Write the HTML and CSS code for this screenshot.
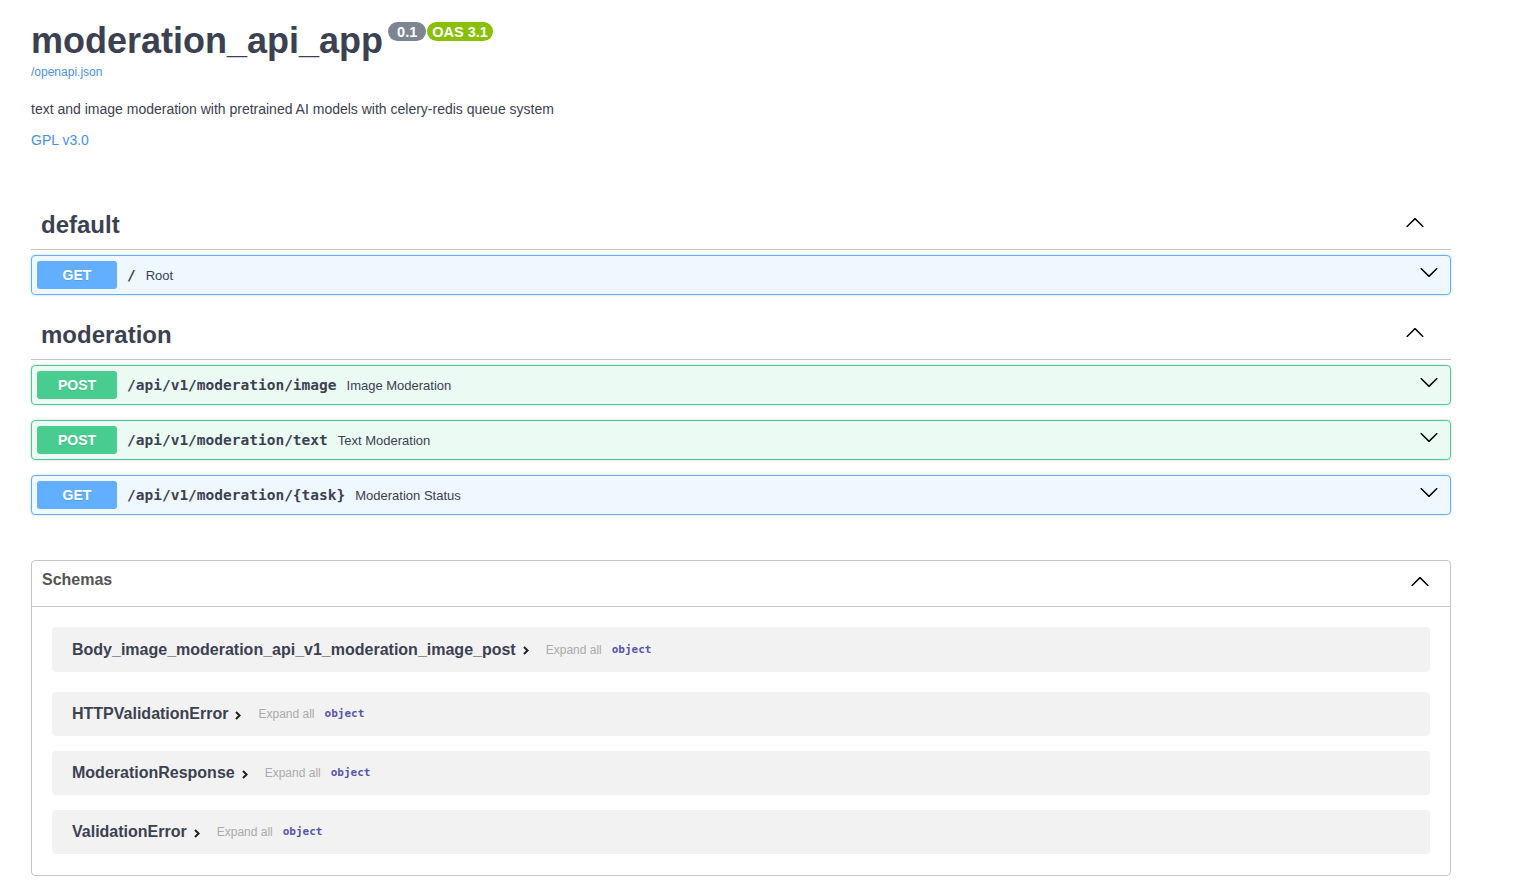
FILE: index.html
```html
<!DOCTYPE html>
<html lang="en">
<head>
<meta charset="utf-8">
<title>moderation_api_app - Swagger UI</title>
<link rel="stylesheet" href="styles.css">
</head>
<body>
<div class="wrapper">
  <section class="info">
    <div class="title-row">
      <h2 class="title">moderation_api_app</h2>
      <span class="badge badge-version"><span class="badge-text"> 0.1 </span></span>
      <span class="badge badge-oas"><span class="badge-text">OAS 3.1</span></span>
    </div>
    <a class="url" href="#">/openapi.json</a>
    <p class="description">text and image moderation with pretrained AI models with celery-redis queue system</p>
    <a class="license" href="#">GPL v3.0</a>
  </section>

  <section class="tag-section tag-first">
    <h3 class="tag">
      <span class="tag-name">default</span>
      <svg class="tag-arrow" width="20" height="20" viewBox="0 0 20 20"><path d="M17.418 14.908c.272.268.709.268.979 0s.271-.701 0-.969l-7.908-7.83c-.27-.268-.707-.268-.979 0l-7.908 7.83c-.27.268-.27.701 0 .969.271.268.709.268.979 0L10 7.767l7.418 7.141z"/></svg>
    </h3>
    <div class="opblock opblock-get">
      <span class="method">GET</span>
      <span class="path">/</span>
      <span class="summary">Root</span>
      <svg class="op-arrow" width="20" height="20" viewBox="0 0 20 20"><path d="M17.418 6.109c.272-.268.709-.268.979 0s.271.701 0 .969l-7.908 7.83c-.27.268-.707.268-.979 0l-7.908-7.83c-.27-.268-.27-.701 0-.969.271-.268.709-.268.979 0L10 13.25l7.418-7.141z"/></svg>
    </div>
  </section>

  <section class="tag-section">
    <h3 class="tag">
      <span class="tag-name">moderation</span>
      <svg class="tag-arrow" width="20" height="20" viewBox="0 0 20 20"><path d="M17.418 14.908c.272.268.709.268.979 0s.271-.701 0-.969l-7.908-7.83c-.27-.268-.707-.268-.979 0l-7.908 7.83c-.27.268-.27.701 0 .969.271.268.709.268.979 0L10 7.767l7.418 7.141z"/></svg>
    </h3>
    <div class="opblock opblock-post">
      <span class="method">POST</span>
      <span class="path">/api/v1/moderation/image</span>
      <span class="summary">Image Moderation</span>
      <svg class="op-arrow" width="20" height="20" viewBox="0 0 20 20"><path d="M17.418 6.109c.272-.268.709-.268.979 0s.271.701 0 .969l-7.908 7.83c-.27.268-.707.268-.979 0l-7.908-7.83c-.27-.268-.27-.701 0-.969.271-.268.709-.268.979 0L10 13.25l7.418-7.141z"/></svg>
    </div>
    <div class="opblock opblock-post">
      <span class="method">POST</span>
      <span class="path">/api/v1/moderation/text</span>
      <span class="summary">Text Moderation</span>
      <svg class="op-arrow" width="20" height="20" viewBox="0 0 20 20"><path d="M17.418 6.109c.272-.268.709-.268.979 0s.271.701 0 .969l-7.908 7.83c-.27.268-.707.268-.979 0l-7.908-7.83c-.27-.268-.27-.701 0-.969.271-.268.709-.268.979 0L10 13.25l7.418-7.141z"/></svg>
    </div>
    <div class="opblock opblock-get">
      <span class="method">GET</span>
      <span class="path">/api/v1/moderation/{task}</span>
      <span class="summary">Moderation Status</span>
      <svg class="op-arrow" width="20" height="20" viewBox="0 0 20 20"><path d="M17.418 6.109c.272-.268.709-.268.979 0s.271.701 0 .969l-7.908 7.83c-.27.268-.707.268-.979 0l-7.908-7.83c-.27-.268-.27-.701 0-.969.271-.268.709-.268.979 0L10 13.25l7.418-7.141z"/></svg>
    </div>
  </section>

  <section class="models">
    <h4 class="models-header">
      <span class="models-title">Schemas</span>
      <svg class="models-arrow" width="20" height="20" viewBox="0 0 20 20"><path d="M17.418 14.908c.272.268.709.268.979 0s.271-.701 0-.969l-7.908-7.83c-.27-.268-.707-.268-.979 0l-7.908 7.83c-.27.268-.27.701 0 .969.271.268.709.268.979 0L10 7.767l7.418 7.141z"/></svg>
    </h4>
    <div class="models-body">
      <div class="model model-first">
        <span class="model-title">Body_image_moderation_api_v1_moderation_image_post</span>
        <svg class="model-toggle" width="6" height="9" viewBox="0 0 6 9"><path d="M1 1 L4.6 4.5 L1 8" fill="none" stroke="#222" stroke-width="2"/></svg>
        <span class="expand">Expand all</span>
        <span class="prop-type">object</span>
      </div>
      <div class="model">
        <span class="model-title">HTTPValidationError</span>
        <svg class="model-toggle" width="6" height="9" viewBox="0 0 6 9"><path d="M1 1 L4.6 4.5 L1 8" fill="none" stroke="#222" stroke-width="2"/></svg>
        <span class="expand">Expand all</span>
        <span class="prop-type">object</span>
      </div>
      <div class="model">
        <span class="model-title">ModerationResponse</span>
        <svg class="model-toggle" width="6" height="9" viewBox="0 0 6 9"><path d="M1 1 L4.6 4.5 L1 8" fill="none" stroke="#222" stroke-width="2"/></svg>
        <span class="expand">Expand all</span>
        <span class="prop-type">object</span>
      </div>
      <div class="model">
        <span class="model-title">ValidationError</span>
        <svg class="model-toggle" width="6" height="9" viewBox="0 0 6 9"><path d="M1 1 L4.6 4.5 L1 8" fill="none" stroke="#222" stroke-width="2"/></svg>
        <span class="expand">Expand all</span>
        <span class="prop-type">object</span>
      </div>
    </div>
  </section>
</div>
</body>
</html>
```

FILE: styles.css
```css
* { box-sizing: border-box; }

html, body {
  margin: 0;
  padding: 0;
  background: #fff;
}

body {
  font-family: "Liberation Sans", Arial, sans-serif;
  color: #3b4151;
}

.wrapper {
  width: 1420px;
  margin-left: 31px;
}

/* ---------- info ---------- */
.info {
  display: flex;
  flex-direction: column;
  align-items: flex-start;
  padding-top: 20px;
}

.title-row {
  display: flex;
  align-items: flex-start;
}

.title {
  margin: 0;
  font-size: 36px;
  line-height: 41px;
  font-weight: bold;
  color: #3b4151;
}

.badge {
  display: inline-block;
  margin-top: 2px;
  border-radius: 57px;
  padding: 2px 5px 1px;
  font-size: 14.5px;
  line-height: 16px;
  font-weight: bold;
  color: #fff;
}

.badge-text { white-space: pre; }

.badge-version {
  background: #7d8492;
  margin-left: 5px;
}

.badge-oas {
  background: #89bf04;
  margin-left: 1px;
}

.url {
  margin-top: 4px;
  font-size: 12px;
  line-height: 14px;
  color: #4990e2;
  text-decoration: none;
}

.description {
  margin: 22px 0 0;
  font-size: 14px;
  line-height: 16px;
  color: #3b4151;
}

.license {
  margin-top: 15px;
  font-size: 14px;
  line-height: 16px;
  color: #4990e2;
  text-decoration: none;
}

/* ---------- tags ---------- */
.tag-section.tag-first {
  margin-top: 52px;
}

.tag {
  display: flex;
  align-items: center;
  height: 50px;
  margin: 0 0 5px;
  padding: 10px 20px 10px 10px;
  border-bottom: 1px solid rgba(59, 65, 81, .3);
}

.tag-name {
  flex: 1;
  font-size: 24px;
  line-height: 29px;
  font-weight: bold;
  color: #3b4151;
}

.tag-arrow {
  align-self: flex-start;
  margin-top: 2px;
  margin-right: 6px;
  fill: #000;
}

/* ---------- operations ---------- */
.opblock {
  display: flex;
  align-items: center;
  height: 40px;
  margin: 0 0 15px;
  padding: 5px;
  border: 1px solid;
  border-radius: 4px;
  box-shadow: 0 0 3px rgba(0, 0, 0, .19);
}

.opblock-get {
  background: rgba(97, 175, 254, .1);
  border-color: #61affe;
}

.opblock-post {
  background: rgba(73, 204, 144, .1);
  border-color: #49cc90;
}

.method {
  display: inline-block;
  min-width: 80px;
  padding: 6px 0;
  border-radius: 3px;
  font-size: 14px;
  line-height: 16px;
  font-weight: bold;
  text-align: center;
  color: #fff;
  text-shadow: 0 1px 0 rgba(0, 0, 0, .1);
}

.opblock-get .method { background: #61affe; }
.opblock-post .method { background: #49cc90; }

.path {
  padding: 0 10px;
  font-family: "DejaVu Sans Mono", "Liberation Mono", monospace;
  font-size: 14.5px;
  font-weight: bold;
  color: #3b4151;
  white-space: nowrap;
}

.summary {
  flex: 1;
  font-size: 13px;
  color: #3b4151;
}

.op-arrow {
  align-self: flex-start;
  margin-top: 1px;
  margin-right: 6px;
  fill: #000;
}

/* ---------- models ---------- */
.models {
  margin: 45px 0 0;
  border: 1px solid rgba(59, 65, 81, .3);
  border-radius: 4px;
}

.models-header {
  display: flex;
  align-items: flex-start;
  height: 46px;
  margin: 0;
  padding: 10px 20px 10px 10px;
  border-bottom: 1px solid rgba(59, 65, 81, .3);
}

.models-title {
  flex: 1;
  font-size: 16px;
  line-height: 18px;
  font-weight: bold;
  color: #555;
}

.models-arrow { fill: #000; }

.models-body {
  padding: 20px 20px 6px;
}

.model {
  display: flex;
  align-items: center;
  height: 44px;
  margin: 0 0 15px;
  padding: 10px 20px;
  border-radius: 4px;
  background: rgba(0, 0, 0, .05);
}

.model.model-first {
  height: 45px;
  margin-bottom: 20px;
}

.model-title {
  font-size: 16px;
  line-height: 18px;
  font-weight: bold;
  color: #3b4151;
}

.model-toggle {
  margin-left: 7px;
  margin-top: 2px;
}

.expand {
  margin-left: 17px;
  font-size: 12px;
  line-height: 14px;
  color: #aaa;
}

.prop-type {
  margin-left: 10px;
  font-family: "DejaVu Sans Mono", "Liberation Mono", monospace;
  font-size: 11px;
  line-height: 14px;
  font-weight: bold;
  color: #55a;
}
```
